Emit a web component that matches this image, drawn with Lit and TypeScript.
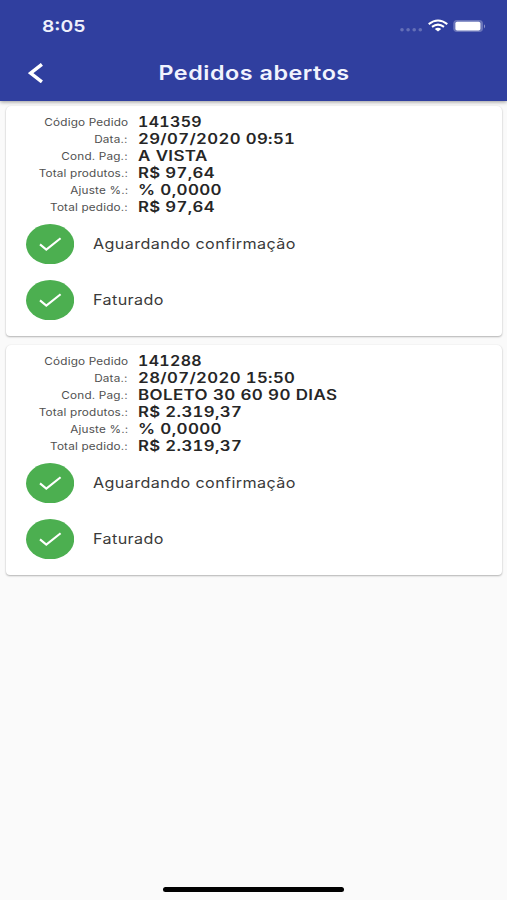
import { LitElement, html, css } from "lit";
import { customElement, property } from "lit/decorators.js";

type FieldKind = "code" | "number" | "terms";

interface Order {
  fields: [string, string, FieldKind][];
  statuses: string[];
}

const ORDERS: Order[] = [
  {
    fields: [
      ["Código Pedido", "141359", "code"],
      ["Data.:", "29/07/2020 09:51", "number"],
      ["Cond. Pag.:", "A VISTA", "terms"],
      ["Total produtos.:", "R$ 97,64", "number"],
      ["Ajuste %.:", "% 0,0000", "terms"],
      ["Total pedido.:", "R$ 97,64", "number"],
    ],
    statuses: ["Aguardando confirmação", "Faturado"],
  },
  {
    fields: [
      ["Código Pedido", "141288", "code"],
      ["Data.:", "28/07/2020 15:50", "number"],
      ["Cond. Pag.:", "BOLETO 30 60 90 DIAS", "terms"],
      ["Total produtos.:", "R$ 2.319,37", "number"],
      ["Ajuste %.:", "% 0,0000", "terms"],
      ["Total pedido.:", "R$ 2.319,37", "number"],
    ],
    statuses: ["Aguardando confirmação", "Faturado"],
  },
];

@customElement("order-card")
export class OrderCard extends LitElement {
  @property({ attribute: false }) order!: Order;

  static styles = css`
    :host {
      display: block;
      box-sizing: border-box;
      height: 230px;
      padding-top: 7px;
      background: #fff;
      border-radius: 5px 5px 4px 4px;
      box-shadow: 0 1px 2px rgba(0, 0, 0, 0.28), 0 0 2px rgba(0, 0, 0, 0.06);
    }
    .field {
      display: grid;
      grid-template-columns: 122px 1fr;
      column-gap: 10px;
      height: 17.1px;
      line-height: 17.1px;
      white-space: nowrap;
    }
    .label {
      justify-self: end;
      font-size: 10.4px;
      color: #505050;
      letter-spacing: 0.15px;
      padding-top: 0.6px;
      transform: scaleX(1.13);
      transform-origin: right;
    }
    .value {
      justify-self: start;
      font-size: 14px;
      font-weight: 600;
      font-variant-numeric: tabular-nums;
      color: #262626;
      letter-spacing: 0.3px;
      transform: scaleX(1.195);
      transform-origin: left;
    }
    .code {
      transform: scaleX(1.14);
    }
    .terms {
      transform: scaleX(1.212);
    }
    .status {
      display: flex;
      align-items: center;
      height: 56px;
      padding-left: 19.5px;
      gap: 19px;
    }
    .list {
      margin-top: 0.2px;
    }
    .badge {
      display: block;
      width: 48.8px;
      height: 40.4px;
    }
    .text {
      font-size: 14.2px;
      color: #3a3a3a;
      letter-spacing: 0.35px;
      white-space: nowrap;
      transform: scaleX(1.138);
      transform-origin: left;
    }
  `;

  render() {
    return html`
      <div>
        ${this.order.fields.map(
          ([label, value, kind]) => html`<div class="field">
            <span class="label">${label}</span><span class="value ${kind}">${value}</span>
          </div>`
        )}
      </div>
      <div class="list">
        ${this.order.statuses.map(
          (s) => html`<div class="status">
            <svg class="badge" viewBox="0 0 48.8 40.4">
              <ellipse cx="24.1" cy="20.2" rx="24.1" ry="20.2" fill="#4caf50" />
              <path d="M14 20.4L20.3 25.6L34.6 14.2" fill="none" stroke="#fff" stroke-width="2.1" />
            </svg>
            <span class="text">${s}</span>
          </div>`
        )}
      </div>
    `;
  }
}

@customElement("app-root")
export class AppRoot extends LitElement {
  static styles = css`
    :host {
      display: flex;
      flex-direction: column;
      height: 900px;
      background: #fafafa;
      font-family: Inter, "Liberation Sans", sans-serif;
      overflow: hidden;
    }
    .bar {
      height: 101px;
      flex: none;
      background: #303f9f;
      color: #fff;
      box-shadow: 0 1px 4px rgba(0, 0, 0, 0.4);
      z-index: 1;
    }
    .system {
      display: flex;
      justify-content: space-between;
      align-items: center;
      height: 52px;
      padding: 0 20px 0 42px;
    }
    .time {
      font-size: 16.5px;
      font-weight: 600;
      color: #eef0fb;
      transform: scaleX(1.17);
      transform-origin: left;
    }
    .indicators {
      display: block;
      width: 88px;
      height: 16px;
    }
    .nav {
      display: grid;
      grid-template-columns: 73px 1fr 71px;
      align-items: center;
      height: 42px;
    }
    .back {
      display: block;
      width: 16px;
      height: 20px;
      margin-left: 28px;
    }
    .title {
      justify-self: center;
      font-size: 19.8px;
      font-weight: 600;
      color: #f1f3fd;
      letter-spacing: 0.45px;
      white-space: nowrap;
      transform: scaleX(1.18);
    }
    .content {
      flex: 1;
      display: flex;
      flex-direction: column;
      gap: 9px;
      padding: 5px 5px 0 6px;
    }
    .home {
      flex: none;
      width: 181px;
      height: 5px;
      margin: 0 auto 8px;
      border-radius: 3px;
      background: #000;
    }
  `;

  render() {
    return html`
      <header class="bar">
        <div class="system">
          <span class="time">8:05</span>
          <svg class="indicators" viewBox="0 0 88 16">
            <g fill="#fff" fill-opacity="0.25">
              <circle cx="3" cy="11.8" r="1.8" />
              <circle cx="9.1" cy="11.8" r="1.8" />
              <circle cx="15.2" cy="11.8" r="1.8" />
              <circle cx="21.3" cy="11.8" r="1.8" />
            </g>
            <g fill="none" stroke="#fff" stroke-width="2">
              <path d="M29.7 6.1Q39 -1.1 48.3 6.1" />
              <path d="M33 8.9Q39 4.3 45 8.9" />
            </g>
            <path d="M35.8 10.9Q39 8.6 42.2 10.9L39 13.6Z" fill="#fff" />
            <rect x="54.2" y="2.1" width="29.8" height="12" rx="3.8" fill="#fff" fill-opacity="0.28" />
            <rect x="56.4" y="3.8" width="25" height="8.8" rx="1.8" fill="#fff" />
            <path d="M85 6.2Q87.3 8.2 85 10.4Z" fill="#fff" fill-opacity="0.45" />
          </svg>
        </div>
        <div class="nav">
          <svg class="back" viewBox="0 0 16 20">
            <path d="M13.9 1.3L2.6 10.2L13.9 18.9" fill="none" stroke="#fff" stroke-width="3.4" />
          </svg>
          <span class="title">Pedidos abertos</span>
        </div>
      </header>
      <main class="content">
        ${ORDERS.map((o) => html`<order-card .order=${o}></order-card>`)}
      </main>
      <div class="home"></div>
    `;
  }
}
